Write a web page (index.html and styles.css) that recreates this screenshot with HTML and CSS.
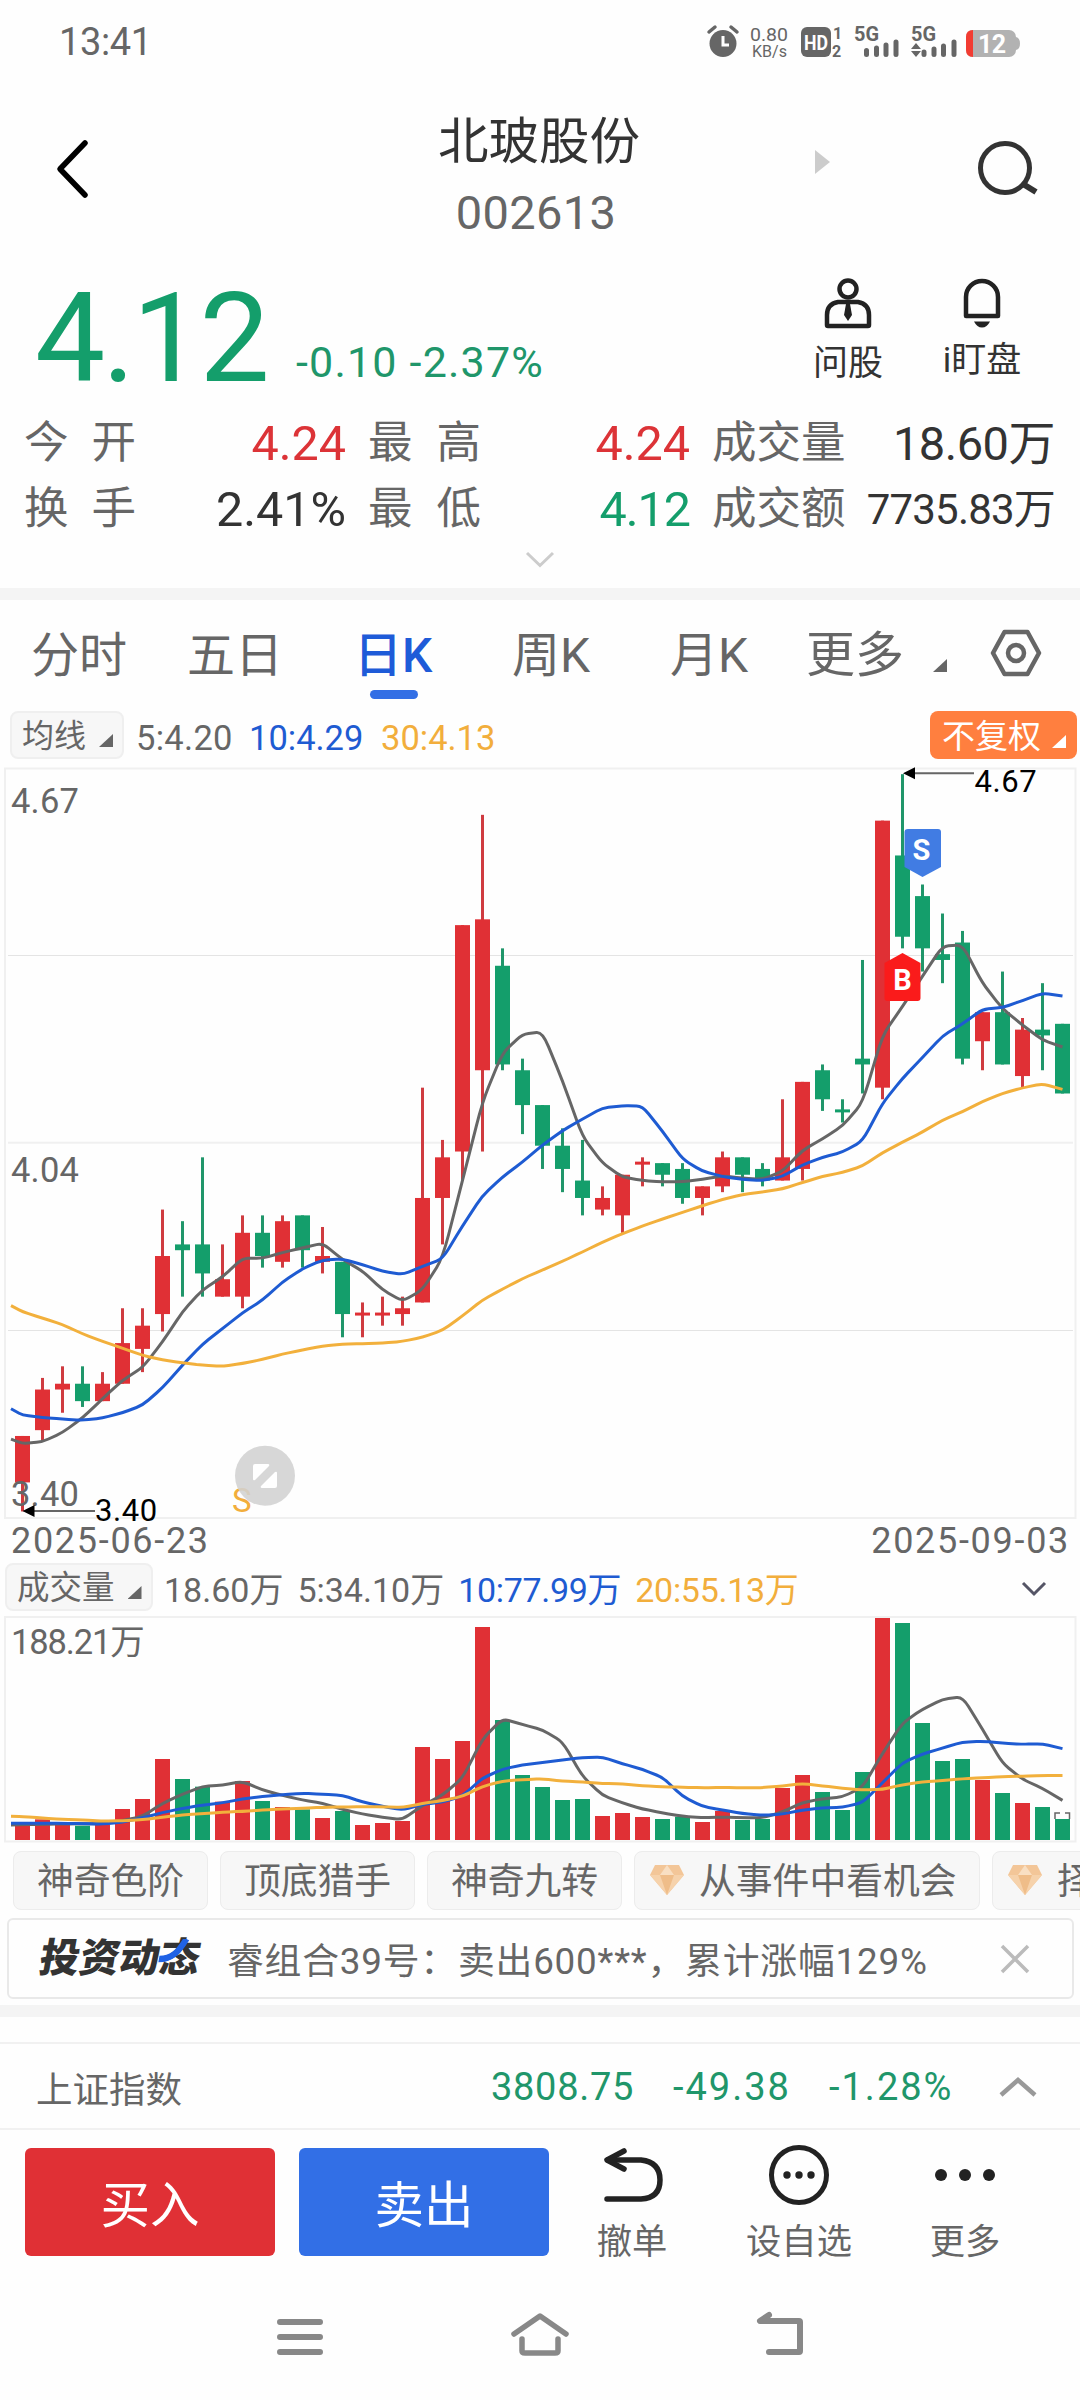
FILE: index.html
```html
<!DOCTYPE html>
<html lang="zh-CN">
<head>
<meta charset="utf-8">
<title>北玻股份 002613</title>
<link rel="stylesheet" href="styles.css">
</head>
<body>
<div class="status">
  <span class="status-time">13:41</span>
  <svg class="status-icons" width="330" height="48" viewBox="700 20 330 48">
    <g fill="#666">
      <circle cx="723" cy="43.500" r="13.500"/>
      <path d="M709 32l6-5M737 32l-6-5" stroke="#666" stroke-width="3.500" stroke-linecap="round"/>
      <path d="M723 36v9h6" fill="none" stroke="#fff" stroke-width="3"/>
      <text x="750" y="41" font-size="19" textLength="38" lengthAdjust="spacingAndGlyphs">0.80</text>
      <text x="752" y="57" font-size="17" textLength="35" lengthAdjust="spacingAndGlyphs">KB/s</text>
      <rect x="801" y="27" width="30" height="30" rx="6"/>
      <text x="804" y="49.500" font-size="20" font-weight="700" fill="#fff" textLength="24" lengthAdjust="spacingAndGlyphs">HD</text>
      <text x="833" y="39" font-size="16" font-weight="700">1</text>
      <text x="832" y="57" font-size="16" font-weight="700">2</text>
      <text x="854" y="41" font-size="20" font-weight="700" textLength="25" lengthAdjust="spacingAndGlyphs">5G</text>
      <text x="911" y="41" font-size="20" font-weight="700" textLength="25" lengthAdjust="spacingAndGlyphs">5G</text>
      <path d="M866.500 50.500v4M876.500 48v6.500M886 45v9.500M896 42v12.500M924 52v2.500M934 49v5.500M943.500 46v8.500M954 42v12.500" stroke="#666" stroke-width="5" stroke-linecap="round"/>
      <path d="M911 49l5-6 5 6zM911 51l5 6 5-6z"/>
    </g>
    <rect x="966" y="30" width="50" height="27" rx="7" fill="#b2b2b2"/>
    <path d="M1016 37q4 1 4 6.500t-4 6.500z" fill="#b2b2b2"/>
    <path d="M973 30v27q-7 0-7-7V37q0-7 7-7z" fill="#f23c32"/>
    <text x="978" y="52.500" font-size="25" font-weight="700" fill="#fff" textLength="28">12</text>
  </svg>
</div>

<header class="header">
  <svg class="back" width="40" height="64" viewBox="0 0 40 64"><path d="M32 6L7 32l25 26" fill="none" stroke="#000" stroke-width="5.500" stroke-linecap="round" stroke-linejoin="round"/></svg>
  <div class="title">
    <div class="name">北玻股份</div>
    <div class="code">002613</div>
  </div>
  <svg class="next" width="15" height="26" viewBox="0 0 15 26"><path d="M0 1l15 12L0 25z" fill="#ccc"/></svg>
  <svg class="search" width="64" height="64" viewBox="0 0 64 64" fill="none" stroke="#333" stroke-width="5"><circle cx="30" cy="32" r="24.500"/><path d="M48 48l13 8" stroke-width="6"/></svg>
</header>

<section class="quote">
  <div class="quote-top">
    <span class="price">4.12</span>
    <span class="change">-0.10 -2.37%</span>
    <div class="action ask">
      <svg width="50" height="52" viewBox="0 0 50 52" fill="none" stroke="#222" stroke-width="4.500"><circle cx="25" cy="12" r="8.500"/><path d="M15 25h20q11 2 11 13v10q0 1-1 1H5q-1 0-1-1V38q0-11 11-13z" stroke-linejoin="round"/><path d="M23 27h4l2 11-4 6-4-6z" fill="#222" stroke="none"/></svg>
      <span>问股</span>
    </div>
    <div class="action watch">
      <svg width="50" height="52" viewBox="0 0 50 52"><path d="M9 39V20a16 16 0 0 1 32 0v19z" fill="none" stroke="#222" stroke-width="4.500" stroke-linejoin="round"/><path d="M17 44.500h16q-3 6-8 6t-8-6z" fill="#222"/></svg>
      <span>i盯盘</span>
    </div>
  </div>
  <div class="stats">
    <div class="k"><span>今</span><span>开</span></div><div class="v up">4.24</div>
    <div class="k"><span>最</span><span>高</span></div><div class="v up">4.24</div>
    <div class="k"><span>成交量</span></div><div class="v amount">18.60万</div>
    <div class="k"><span>换</span><span>手</span></div><div class="v">2.41%</div>
    <div class="k"><span>最</span><span>低</span></div><div class="v down">4.12</div>
    <div class="k"><span>成交额</span></div><div class="v small">7735.83万</div>
  </div>
  <svg class="expand" width="30" height="18" viewBox="0 0 30 18"><path d="M2 2l13 12.500L28 2" fill="none" stroke="#ccc" stroke-width="3"/></svg>
</section>
<div class="band"></div>

<nav class="tabs">
  <span>分时</span><span>五日</span><span class="active">日K</span><span>周K</span><span>月K</span><span class="more">更多<i class="corner"></i></span>
  <svg width="52" height="50" viewBox="0 0 52 50" fill="none" stroke="#666" stroke-width="4.500"><path d="M14.500 4h23L49 25 37.500 46h-23L3 25z" stroke-linejoin="round"/><circle cx="26" cy="25" r="8"/></svg>
</nav>

<div class="ma-row">
  <span class="pill ma-pill">均线<i class="corner"></i></span>
  <span class="c5">5:4.20</span><span class="c10">10:4.29</span><span class="c30">30:4.13</span>
  <span class="adjust">不复权<i class="corner"></i></span>
</div>

<svg id="kline" class="chart" width="1080" height="756" viewBox="0 766 1080 756">
  <g fill="none" stroke="#f0f0f0">
    <rect x="5" y="768.500" width="1070.500" height="749.500" stroke-width="2"/>
    <path d="M8 1142.700H1073" stroke-width="2"/>
    <path d="M8 955.500H1073M8 1330.500H1073" stroke="#e4e4e4"/>
  </g>
  <g id="candles"></g>
  <g id="price-lines"></g>
  <g class="axis"><text x="11" y="812.500">4.67</text><text x="11" y="1181.500">4.04</text><text x="11" y="1505.500">3.40</text></g>
  <g class="callout">
    <path d="M914 773.200H974M34 1511H95" stroke="#666" stroke-width="2"/>
    <path d="M903 773.200l12-6v12zM22.500 1511l12-6v12z"/>
    <text x="974.500" y="791.500">4.67</text><text x="95" y="1521">3.40</text>
  </g>
  <path d="M908 829h30q3 0 3 3v35l-18.500 10-18-10v-35q0-3 3.500-3z" fill="#417ce3"/>
  <path d="M902.500 953l18 10v35q0 3-3 3h-30q-3 0-3-3v-35z" fill="#fa1b1b"/>
  <g class="marker"><text x="921.500" y="859.500">S</text><text x="902.500" y="990">B</text></g>
  <text class="signal" x="232" y="1512">S</text>
  <circle cx="265" cy="1475.700" r="30" fill="#d2d2d2" fill-opacity=".88"/>
  <path d="M255 1464h13q2 0 1 2l-14 14q-2 1-2-1v-13q0-2 2-2zM275 1488h-13q-2 0-1-2l14-14q2-1 2 1v13q0 2-2 2z" fill="#fff"/>
</svg>
<div class="dates"><span>2025-06-23</span><span>2025-09-03</span></div>

<div class="vol-row">
  <span class="pill vol-pill">成交量<i class="corner"></i></span>
  <span class="c5">18.60万</span><span class="c5">5:34.10万</span><span class="c10">10:77.99万</span><span class="c30">20:55.13万</span>
  <svg width="26" height="16" viewBox="0 0 26 16"><path d="M2 2l11 11L24 2" fill="none" stroke="#556" stroke-width="3"/></svg>
</div>
<svg id="volume" class="chart" width="1080" height="230" viewBox="0 1614 1080 230">
  <rect x="5" y="1617" width="1070.500" height="224.500" fill="none" stroke="#f0f0f0" stroke-width="2"/>
  <g id="bars"></g>
  <g id="volume-lines"></g>
  <path d="M1055 1819v-6h5M1065 1813h4.500v6" fill="none" stroke="#666" stroke-width="1.500"/>
  <g class="axis"><text x="11" y="1653.500" textLength="134">188.21万</text></g>
</svg>

<div class="chips">
  <span>神奇色阶</span><span>顶底猎手</span><span>神奇九转</span>
  <span class="gem"><svg width="36" height="32" viewBox="0 0 36 32"><path d="M6 1h24l5 10-17 20L1 11z" fill="#f3c698"/><path d="M1 11h34L18 31z" fill="#f6d2ab"/><path d="M11 11h14l-7 20z" fill="#efbd89"/><path d="M11 11l7-10 7 10z" fill="#f9dfc2"/></svg>从事件中看机会</span>
  <span class="gem"><svg width="36" height="32" viewBox="0 0 36 32"><path d="M6 1h24l5 10-17 20L1 11z" fill="#f3c698"/><path d="M1 11h34L18 31z" fill="#f6d2ab"/><path d="M11 11h14l-7 20z" fill="#efbd89"/><path d="M11 11l7-10 7 10z" fill="#f9dfc2"/></svg>择时</span>
</div>

<div class="news">
  <span class="news-logo">投资动态<svg class="swoosh" width="32" height="26" viewBox="0 0 32 26"><path d="M26 0C20 14 14 20 2 20" fill="none" stroke="#1f62e6" stroke-width="6.500"/></svg></span>
  <span class="news-text">睿组合39号：卖出600***，累计涨幅129%</span>
  <svg width="30" height="30" viewBox="0 0 30 30"><path d="M2 2l26 26M28 2L2 28" stroke="#bbb" stroke-width="3.500"/></svg>
</div>
<div class="band band-low"></div>

<div class="index-row">
  <span class="index-name">上证指数</span><span class="n1">3808.75</span><span class="n2">-49.38</span><span class="n3">-1.28%</span>
  <svg width="38" height="22" viewBox="0 0 38 22"><path d="M2 19L19 4l17 15" fill="none" stroke="#999" stroke-width="4.500"/></svg>
</div>

<div class="trade">
  <div class="btn buy">买入</div>
  <div class="btn sell">卖出</div>
  <div class="tool t1"><svg width="64" height="62" viewBox="0 0 64 62" fill="none" stroke="#222" stroke-width="5.500" stroke-linecap="round" stroke-linejoin="round"><path d="M24 7L7 16l17 9"/><path d="M8 16h33q19 2 19 20t-19 19H7"/></svg><span>撤单</span></div>
  <div class="tool t2"><svg width="64" height="62" viewBox="0 0 64 62"><circle cx="32" cy="31" r="27.500" fill="none" stroke="#222" stroke-width="5"/><g fill="#222"><circle cx="20" cy="31" r="3.700"/><circle cx="32" cy="31" r="3.700"/><circle cx="44" cy="31" r="3.700"/></g></svg><span>设自选</span></div>
  <div class="tool t3"><svg width="64" height="62" viewBox="0 0 64 62" fill="#222"><circle cx="8" cy="31" r="6"/><circle cx="32" cy="31" r="6"/><circle cx="56" cy="31" r="6"/></svg><span>更多</span></div>
</div>

<div class="sysnav">
  <svg width="46" height="38" viewBox="0 0 46 38" fill="none" stroke="#888" stroke-width="6" stroke-linecap="round"><path d="M3 4h40M3 19h40M3 34h40"/></svg>
  <svg width="60" height="46" viewBox="0 0 60 46" fill="none" stroke="#888" stroke-width="5.500" stroke-linecap="round" stroke-linejoin="round"><path d="M4 23L30 5l26 18"/><path d="M12 28v12q0 2 3 2h30q3 0 3-2V28"/></svg>
  <svg width="50" height="46" viewBox="0 0 50 46" fill="none" stroke="#888" stroke-width="6" stroke-linecap="round" stroke-linejoin="round"><path d="M14 4L5 10h39q1 0 1 1v29q0 1-1 1H14"/></svg>
</div>
<script src="chart.js"></script>
</body>
</html>
```
FILE: styles.css
```css
* { box-sizing: border-box; }
body {
  margin: 0;
  width: 1080px;
  height: 2400px;
  overflow: hidden;
  background: #fefefe;
  color: #333;
  font-family: Roboto, "Noto Sans CJK SC", sans-serif;
  white-space: nowrap;
}
svg { display: block; flex: none; }
.corner { display: inline-block; width: 14px; height: 13px; background: currentColor; clip-path: polygon(100% 0, 100% 100%, 0 100%); }

.status { height: 84px; padding: 20px 0 0 59px; display: flex; color: #666; }
.status-time { font-size: 38px; line-height: 45px; letter-spacing: -0.4px; width: 641px; }

.header { height: 156px; display: grid; grid-template-columns: 53px 387px 200px 175px 160px 105px; }
.back { grid-column: 1 / 3; margin: 53px 0 0 53px; }
.title { grid-column: 3; text-align: center; width: 200px; margin-left: -2px; }
.name { font-size: 50.500px; line-height: 60px; margin-top: 28px; }
.code { font-size: 47px; line-height: 50px; margin-top: 16px; color: #666; letter-spacing: 0.3px; position: relative; left: -2px; }
.next { grid-column: 4; margin: 65px 0 0 175px; }
.search { grid-column: 5; margin: 52px 0 0 160px; }

.quote { height: 348px; }
.quote-top { height: 170px; display: flex; align-items: flex-start; }
.price { margin-left: 35px; width: 261px; font-size: 125px; line-height: 140px; margin-top: 29px; letter-spacing: -3px; color: #149e6b; }
.change { font-size: 43px; line-height: 50px; margin-top: 97px; width: 504px; letter-spacing: 1.200px; color: #20966a; }
.action { display: flex; flex-direction: column; align-items: center; width: 100px; font-size: 35px; line-height: 42px; padding-top: 37px; }
.ask { margin-left: -2px; }
.ask span { margin-top: 14px; }
.watch { margin-left: 34px; }
.watch span { margin-top: 11px; }
.stats { display: grid; grid-template-columns: 112px 210px 135px 209px 158px 207px; grid-auto-rows: 66px; padding-left: 24px; line-height: 66px; }
.k { display: flex; justify-content: space-between; font-size: 44.500px; color: #666; }
.k:nth-child(6n + 3), .k:nth-child(6n + 5) { padding-left: 22px; }
.v { text-align: right; font-size: 48.500px; padding: 1px 0 0; }
.up { color: #dc3337; }
.down { color: #149e6b; letter-spacing: -1px; }
.amount { font-size: 47px; letter-spacing: -0.5px; }
.small { font-size: 42px; letter-spacing: -0.8px; }
.expand { margin: 9px auto 0; }
.band { height: 12px; background: #f4f4f4; }

.tabs { height: 104px; display: grid; grid-template-columns: 156px 155px 158px 155px 157px 178px 60px; padding: 24px 0 0 31px; font-size: 48px; line-height: 64px; color: #666; }
.tabs svg { margin-top: 4px; }
.tabs .active { color: #1e5bd8; font-weight: 500; position: relative; margin-left: 12px; }
.tabs .active::after { content: ""; position: absolute; left: 16px; top: 66px; width: 48px; height: 9px; border-radius: 5px; background: #336fe5; }
.tabs span:nth-child(4) { margin-left: 12px; }
.tabs span:nth-child(5) { margin-left: 15px; }
.tabs .more { margin-left: -6px; font-size: 49px; }
.tabs .corner { margin-left: 29px; }

.ma-row, .vol-row { display: flex; align-items: flex-start; font-size: 34.500px; line-height: 55px; }
.ma-row { height: 62px; padding: 7px 3px 0 10px; }
.pill { background: #f7f7f7; border: 2px solid #efefef; border-radius: 8px; height: 48px; line-height: 47px; font-size: 32px; color: #666; }
.pill .corner, .adjust .corner { margin-left: 13px; }
.ma-pill { width: 114px; padding-left: 10px; margin-right: 12px; }
.c5 { color: #666; }
.c10 { color: #1e5bd2; }
.c30 { color: #f2ae3c; }
.ma-row .c5 { width: 113px; letter-spacing: 0.3px; }
.ma-row .c10 { width: 132px; }
.adjust { margin-left: auto; width: 147px; height: 48px; border-radius: 8px; background: #ff7f3f; color: #fff; font-size: 33px; line-height: 51px; padding-left: 12px; }
.adjust .corner { margin-left: 11px; }
.axis text { font-size: 34.500px; fill: #666; letter-spacing: 0.2px; }
.callout text { font-size: 31px; letter-spacing: 0.6px; }
.marker text { font-size: 29px; font-weight: 700; fill: #fff; text-anchor: middle; }
.signal { font-size: 33px; fill: #f2ae3c; }
.dates { height: 40px; padding: 0 10px 0 11px; display: flex; justify-content: space-between; font-size: 36px; line-height: 38px; letter-spacing: 1.7px; color: #666; }
.vol-row { height: 52px; padding: 1px 0 0 5px; font-size: 34px; gap: 14px; }
.vol-pill { width: 148px; padding-left: 10px; font-size: 32.500px; margin-right: -3px; }
.vol-pill .corner { margin-left: 13px; }
.vol-row .c10, .vol-row .c30 { letter-spacing: -0.3px; }
.vol-row > svg { margin: 18px 33px 0 auto; }

.chips { height: 74px; padding: 7px 0 0 13px; display: flex; gap: 12px; font-size: 36.800px; line-height: 60px; color: #666; overflow: hidden; }
.chips > span { flex: none; width: 195px; height: 59px; border: 1px solid #ececec; border-radius: 8px; background: #f7f7f7; text-align: center; }
.chips .gem { width: 346px; display: flex; text-align: left; padding-left: 14px; gap: 14px; }
.gem svg { margin-top: 12px; }

.news { height: 81px; margin: 0 6px 0 7px; border: 2px solid #e9e9e9; border-radius: 6px; display: flex; align-items: center; color: #666; }
.news-logo { position: relative; width: 190px; padding-left: 31px; font-size: 40px; line-height: 63px; font-weight: 900; color: #333; transform: skewX(-10deg); }
.swoosh { position: absolute; left: 148px; top: 12px; }
.news-text { margin-left: 28px; font-size: 36.800px; letter-spacing: 0.8px; position: relative; top: -1px; }
.news > svg { margin: 0 42px 0 auto; }
.band-low { margin-top: 6px; }
.index-row { margin-top: 25px; height: 88px; border-top: 2px solid #f1f1f1; border-bottom: 2px solid #f1f1f1; display: flex; align-items: center; font-size: 38px; color: #20966a; padding: 2px 0 0 36px; letter-spacing: 0.7px; }
.index-name { font-size: 36.500px; width: 455px; color: #666; letter-spacing: 0; }
.n1 { width: 182px; }
.n2 { width: 156px; letter-spacing: 2px; }
.n3 { width: 170px; letter-spacing: 2px; }

.trade { height: 150px; display: flex; padding: 18px 0 0 25px; }
.btn { width: 250px; height: 108px; border-radius: 6px; color: #fff; font-size: 49.500px; line-height: 117px; text-align: center; margin-right: 24px; }
.buy { background: #e03035; }
.sell { background: #326fe6; }
.tool { width: 120px; display: flex; flex-direction: column; align-items: center; font-size: 35.300px; line-height: 42px; color: #666; margin-top: -4px; }
.tool span { margin-top: 15px; }
.t1 { margin-left: -1px; }
.t2 { margin-left: 47px; }
.t3 { margin-left: 46px; }
.sysnav { display: flex; padding: 31px 0 0 277px; }
.sysnav svg:nth-child(1) { margin-top: 7px; }
.sysnav svg:nth-child(2) { margin-left: 187px; }
.sysnav svg:nth-child(3) { margin-left: 185px; }
```
FILE: chart.js
```js
// One row per trading day: colour, high, body top, body bottom, low (cents), volume
const days = [
  ['r',353,353,345,340,44],['r',363,361,354,352,62],['r',365,362,361,357,48],['g',365,362,359,358,43],['r',364,362,359,359,47],
  ['r',375,369,362,362,93],['r',375,372,368,364,123],['r',392,384,374,371,243],['g',390,386,385,377,183],['g',401,386,381,377,160],
  ['r',386,380,377,377,115],['r',391,388,377,375,177],['g',391,388,384,382,117],['r',391,390,383,382,99],['g',391,391,385,382,92],
  ['r',389,384,383,381,66],['g',383,383,374,370,87],['r',376,374,374,370,45],['r',377,374,374,372,51],['r',377,375,374,372,57],
  ['r',413,394,376,376,279],['r',404,401,394,386,243],['r',441,441,402,397,297],['r',460,442,416,402,639],['g',437,434,417,416,360],
  ['g',418,416,410,405,195],['g',410,410,403,399,159],['g',406,403,399,395,120],['g',404,397,394,391,123],['r',396,394,392,391,72],
  ['r',398,398,391,388,81],['r',401,400,400,396,69],['g',400,400,398,396,63],['g',400,399,394,393,70],['r',396,396,394,391,54],
  ['r',402,401,396,395,87],['g',401,401,398,395,60],['g',400,399,397,396,63],['r',411,401,397,397,156],['r',414,414,399,397,195],
  ['g',417,416,411,409,144],['g',411,409,409,407,90],['g',435,418,417,412,204],['r',459,459,413,411,666],['g',467,453,439,437,651],
  ['g',448,446,437,433,351],['g',443,436,435,431,237],['g',440,438,418,417,243],['r',426,426,421,416,180],['g',433,426,417,417,141],
  ['r',425,423,415,413,111],['g',431,423,422,416,99],['g',424,424,412,412,63]
];
const colors = { r: '#e03035', g: '#149e6b' };
const wicks = { r: '#cf3b40', g: '#20966a' };
const cx = i => 22.5 + i * 20;
const priceY = p => 774.2 + (467 - p) * 5.805;
const volY = v => 1840 - v / 3;
const closes = days.map(d => d[0] === 'r' ? d[2] : d[3]);
const volumes = days.map(d => d[5]);

// Moving average; "lead" holds the values from the day before the window on
function average(values, n, lead) {
  const out = lead.slice();
  for (let i = lead.length - 1; i < values.length; i++) {
    let sum = 0;
    for (let k = i - n + 1; k <= i; k++) sum += values[k];
    out.push(sum / n);
  }
  return out;
}

function line(values, y, color) {
  let p = values.map((v, i) => [cx(i - 1), y(v)]);
  const t = (11 - p[0][0]) / 20;
  p[0] = [11, p[0][1] + (p[1][1] - p[0][1]) * t];
  const mix = (a, b, k) => (a[0] + (b[0] - a[0]) * k).toFixed(1) + ' ' + (a[1] + (b[1] - a[1]) * k).toFixed(1);
  let d = 'M' + mix(p[0], p[0], 0);
  for (let i = 1; i < p.length - 1; i++) {
    d += 'L' + mix(p[i], p[i - 1], 0.3) + 'Q' + mix(p[i], p[i], 0) + ' ' + mix(p[i], p[i + 1], 0.3);
  }
  d += 'L' + mix(p[p.length - 1], p[p.length - 1], 0);
  return `<path d="${d}" fill="none" stroke="${color}" stroke-width="3" stroke-linejoin="round"/>`;
}

let candles = '', bars = '';
days.forEach(([c, high, top, bottom, low, vol], i) => {
  const x = cx(i), a = priceY(top), b = priceY(bottom), h = Math.max(b - a, 3);
  candles += `<rect x="${x - 1.5}" y="${priceY(high)}" width="3" height="${priceY(low) - priceY(high)}" fill="${wicks[c]}"/>`;
  candles += `<rect x="${x - 7.5}" y="${h === 3 ? a - 1.5 : a}" width="15" height="${h}" fill="${colors[c]}"/>`;
  bars += `<rect x="${x - 7.5}" y="${volY(vol)}" width="15" height="${vol / 3}" fill="${colors[c]}"/>`;
});
document.getElementById('candles').innerHTML = candles;
document.getElementById('bars').innerHTML = bars;

const ma5 = average(closes, 5, [353, 351.7, 352, 353.6, 356.1]);
const ma10 = average(closes, 10, [358.5, 356.6, 356.2, 355.9, 355.7, 356.1, 357, 358.3, 361.3, 365.2]);
const ma30 = average(closes, 30, [376.2, 374.4, 373.3, 372.2, 370.6, 369.3, 368.1, 366.9, 366.1, 365.6, 365.2, 365, 365.5, 366.2, 367.1, 367.8, 368.5, 368.8, 368.9, 369, 369.3, 370, 371.2, 373.7, 376.4, 378.3, 380.1, 381.6, 383.1, 384.7]);
document.getElementById('price-lines').innerHTML =
  line(ma5, priceY, '#666') + line(ma10, priceY, '#1e5bd2') + line(ma30, priceY, '#f2b03c');

const v5 = average(volumes, 5, [45, 46, 47, 48, 49]);
const v10 = average(volumes, 10, [50, 50, 50, 50, 49, 48, 53, 67, 82, 95]);
const v20 = average(volumes, 20, [72, 70, 66, 62, 60, 57, 58, 61, 68, 75, 79, 83, 86, 90, 93, 95, 98, 99, 100, 100]);
document.getElementById('volume-lines').innerHTML =
  line(v5, volY, '#666') + line(v10, volY, '#1e5bd2') + line(v20, volY, '#f2b03c');
```
